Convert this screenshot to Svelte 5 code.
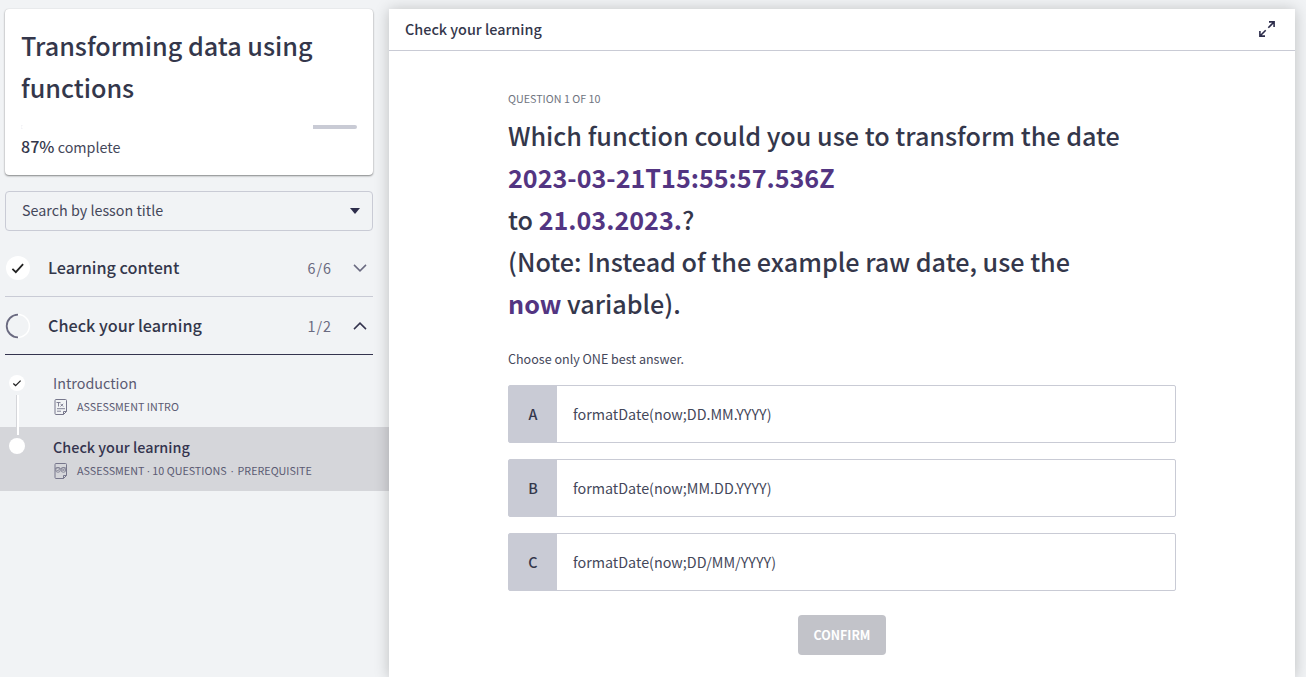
<script>
  const answers = [
    { key: 'A', text: 'formatDate(now;DD.MM.YYYY)' },
    { key: 'B', text: 'formatDate(now;MM.DD.YYYY)' },
    { key: 'C', text: 'formatDate(now;DD/MM/YYYY)' }
  ];
</script>

<div class="app">
  <aside class="sidebar">
    <section class="card">
      <h1>Transforming data using functions</h1>
      <div class="progress"><span style="width: 87%"></span></div>
      <p class="complete"><b>87%</b> complete</p>
    </section>

    <div class="search">
      <span>Search by lesson title</span>
      <svg width="10" height="6" viewBox="0 0 10 6"><path d="M0 0h10L5 6z" fill="#2d2d4b" /></svg>
    </div>

    <div class="section">
      <svg class="state" width="26" height="26" viewBox="0 0 26 26">
        <circle cx="13" cy="13" r="12" fill="#fff" />
        <path d="M7.4 13.9l3.4 3.2 7.3-8" fill="none" stroke="#222" stroke-width="1.8" />
      </svg>
      <span class="name">Learning content</span>
      <span class="count">6/6</span>
      <svg width="14" height="8" viewBox="0 0 14 8"><path d="M1 .9l6 6 6-6" fill="none" stroke="#6a6a80" stroke-width="1.5" /></svg>
    </div>
    <div class="section open">
      <svg class="state" width="26" height="26" viewBox="0 0 26 26">
        <circle cx="13" cy="13" r="11.4" fill="none" stroke="#fff" stroke-width="1.5" />
        <path d="M13 24.3a11.3 11.3 0 0 1 0-22.6" fill="none" stroke="#6a6a80" stroke-width="1.8" />
      </svg>
      <span class="name">Check your learning</span>
      <span class="count">1/2</span>
      <svg width="14" height="8" viewBox="0 0 14 8"><path d="M1 7.1l6-6 6 6" fill="none" stroke="#34344e" stroke-width="1.5" /></svg>
    </div>

    <ul class="lessons">
      <li>
        <div class="track">
          <svg width="16" height="16" viewBox="0 0 16 16">
            <circle cx="8" cy="8" r="8" fill="#fff" />
            <path d="M4.3 8.6l2.3 2 5-5" fill="none" stroke="#222" stroke-width="1.3" />
          </svg>
          <i class="line"></i>
        </div>
        <div class="lesson">
          <span class="title">Introduction</span>
          <span class="meta">
            <svg width="15" height="16" viewBox="-1 0 15 16" fill="none" stroke="#77778c">
              <path d="M2 .5h9.500a1 1 0 0 1 1 1v11L9.500 15.500H2a1 1 0 0 1-1-1V1.500a1 1 0 0 1 1-1zM12.500 12.500h-3v3" />
              <path d="M2.500 3.500h4M4.500 3.500v4M6.500 4.800l2.700 2.700M9.200 4.800L6.500 7.500M3 9.700h8M3 12.200h4" stroke-width=".9" />
            </svg>
            <span>ASSESSMENT INTRO</span>
          </span>
        </div>
      </li>
      <li class="current">
        <div class="track">
          <svg width="16" height="16" viewBox="0 0 16 16"><circle cx="8" cy="8" r="8" fill="#fff" /></svg>
        </div>
        <div class="lesson">
          <span class="title">Check your learning</span>
          <span class="meta">
            <svg width="15" height="16" viewBox="-1 0 15 16" fill="none" stroke="#77778c">
              <path d="M2 .5h9.500a1 1 0 0 1 1 1v11L9.500 15.500H2a1 1 0 0 1-1-1V1.500a1 1 0 0 1 1-1zM12.500 12.500h-3v3" />
              <path d="M1 5.600l1.500-1h2.500l1.700 1 1.700-1h2.500l1.600 1M2.700 7l1 1 1.800-2M8.400 6l2 2M10.400 6l-2 2" stroke-width=".8" />
              <circle cx="4" cy="7" r="2.300" stroke-width=".8" /><circle cx="9.400" cy="7" r="2.300" stroke-width=".8" />
            </svg>
            <span>ASSESSMENT<em>·</em>10 QUESTIONS<em class="wide">·</em>PREREQUISITE</span>
          </span>
        </div>
      </li>
    </ul>
  </aside>

  <main>
    <header>
      <span>Check your learning</span>
      <svg width="18" height="18" viewBox="0 0 18 18" fill="none" stroke="#2d2d4b" stroke-width="1.600">
        <path d="M11 1.900h5.100V7M16 2l-5.700 5.700M7 16.100H1.900V11M2 16l5.700-5.700" />
      </svg>
    </header>
    <div class="question">
      <p class="step">QUESTION 1 OF 10</p>
      <h2>
        Which function could you use to transform the date<br />
        <b>2023-03-21T15:55:57.536Z</b><br />
        to <b>21.03.2023.</b>?<br />
        (Note: Instead of the example raw date, use the<br />
        <b>now</b> variable).
      </h2>
      <p class="hint">Choose only ONE best answer.</p>
      <div class="answers">
        {#each answers as a}
          <div class="answer"><span class="key">{a.key}</span><span class="text">{a.text}</span></div>
        {/each}
      </div>
      <button>CONFIRM</button>
    </div>
  </main>
</div>

<style>
  :global(body) { background: #f1f3f5; overflow: hidden; }
  .app {
    display: flex;
    height: 677px;
    overflow: hidden;
    box-sizing: border-box;
    padding-top: 9px;
    background: #f1f3f5;
    color: #34374b;
    font-family: "Noto Sans CJK SC", sans-serif;
    font-size: 14.33px;
  }
  .app * { box-sizing: border-box; }
  h1, h2, p, ul { margin: 0; padding: 0; }
  svg { flex: none; display: block; }
  .sidebar { width: 389px; flex: none; }
  .card {
    width: 368px; height: 166px; margin-left: 5px; padding: 15px 16px 0;
    background: #fff; border-radius: 4px;
    box-shadow: 0 1px 2px rgba(0, 0, 0, .45), 0 0 1px rgba(0, 0, 0, .15);
  }
  h1, h2 { font-size: 25.17px; line-height: 42px; font-weight: 500; }
  .progress { height: 4px; margin-top: 17px; border-radius: 2px; background: #c9cbd5; overflow: hidden; }
  .progress span { display: block; height: 4px; background: #fff; }
  .complete { line-height: 24px; margin-top: 5px; color: #44475a; }
  .complete b { font-weight: 500; font-size: 16.1px; color: #34374b; }
  .search {
    display: flex; align-items: center; justify-content: space-between;
    width: 368px; height: 40px; margin: 16px 0 9px 5px; padding: 0 12px 0 16px;
    border: 1px solid #c9cbd5; border-radius: 4px; color: #44475a;
  }
  .search span { padding-bottom: 3px; }
  .section {
    display: flex; align-items: center; width: 368px; height: 57px;
    margin-left: 5px; padding-right: 6px; border-bottom: 1px solid #c9cbd5;
  }
  .section.open { height: 58px; border-color: #34344e; }
  .name { margin-left: 17px; padding-bottom: 2px; flex: 1; font-size: 16.2px; font-weight: 500; }
  .count { margin-right: 21px; padding-bottom: 1px; color: #6a6a80; letter-spacing: 1px; }
  .open .count { padding-bottom: 0; }
  .lessons { list-style: none; margin-top: 8px; }
  li { display: flex; height: 64px; color: #5a5a72; }
  .current { background: #d5d6da; }
  .track { width: 53px; padding: 12px 0 0 9px; }
  .current .track { padding-top: 11px; }
  .line { display: block; width: 3px; height: 40px; margin: 4px 0 0 7px; background: #fff; border-left: 1px solid #d5d6da; }
  .lesson { padding-top: 8px; }
  .title { display: block; line-height: 24px; }
  .current .title { font-weight: 500; font-size: 14.4px; color: #34344e; }
  .meta { display: flex; gap: 9px; height: 16px; margin-top: 4px; align-items: center; font-size: 10.74px; line-height: 16px; }
  em { display: inline-block; width: 8px; font-style: normal; font-family: "Open Sans", sans-serif; text-align: center; line-height: 14px; }
  .wide { width: 11px; }
  main { width: 906px; background: #fff; box-shadow: 0 1px 14px rgba(0, 0, 0, .22); }
  header {
    display: flex; align-items: center; justify-content: space-between; height: 42px;
    padding: 0 19px 2px 16px; border-bottom: 1px solid #c9cbd5; font-weight: 500; font-size: 14.4px;
  }
  .question { width: 668px; margin-left: 119px; padding-top: 40px; }
  .step { font-size: 10.74px; line-height: 16px; color: #6f7480; }
  h2 { margin-top: 7px; white-space: nowrap; }
  h2 b { font-weight: 700; color: #533582; }
  .hint { font-size: 12.54px; line-height: 20px; margin-top: 25px; color: #44475a; }
  .answers { display: flex; flex-direction: column; gap: 16px; margin-top: 16px; }
  .answer { display: flex; height: 58px; border: 1px solid #c9cbd5; border-radius: 2px; align-items: stretch; }
  .key { width: 48px; padding-bottom: 2px; background: #c9cbd5; font-weight: 500; display: flex; align-items: center; justify-content: center; }
  .text { padding: 0 0 2px 16px; display: flex; align-items: center; color: #44475a; }
  button {
    display: block; width: 88px; height: 40px; margin: 24px auto 0; padding: 0; border: 0; border-radius: 4px;
    background: #c2c3c9; color: #fff; font-family: inherit; font-size: 12.4px; line-height: 40px; font-weight: 700;
  }
</style>
